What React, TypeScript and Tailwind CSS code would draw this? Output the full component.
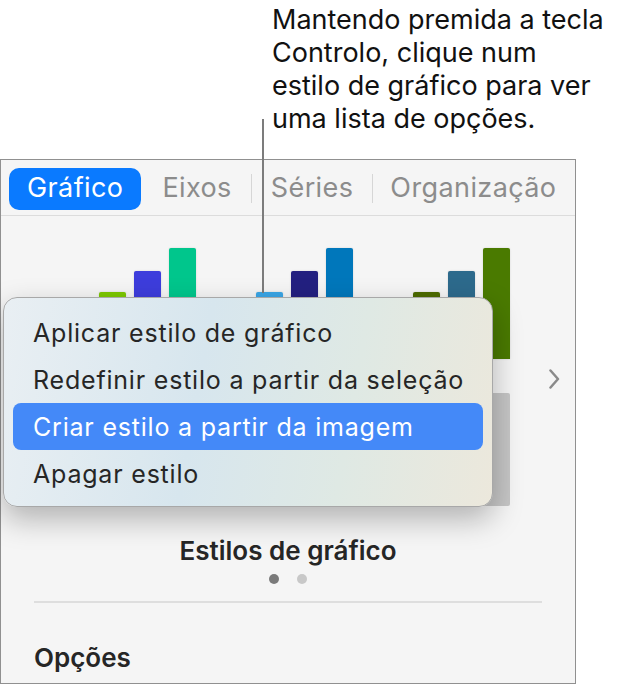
import React from "react";

const bars = [
  ["bg-[#7cc800]", "bg-[#3d3ddc]", "bg-[#00c68c]"],
  ["bg-[#3aa6e6]", "bg-[#232080]", "bg-[#0077bb]"],
  ["bg-[#4d6b00]", "bg-[#2d6a8c]", "bg-[#4a7a00]"],
];
const heights = ["h-[67px]", "h-[88px]", "h-[111px]"];

const menuItems = [
  "Aplicar estilo de gráfico",
  "Redefinir estilo a partir da seleção",
  "Criar estilo a partir da imagem",
  "Apagar estilo",
];

export default function App() {
  return (
    <div className="relative w-[622px] h-[684px] bg-white overflow-hidden font-['Inter','Liberation_Sans',sans-serif]">
      {/* callout */}
      <div className="h-[159px] pl-[272px] pt-[3px] text-[27px] leading-[33px] text-[#111]">
        Mantendo premida a tecla
        <br />
        Controlo, clique num
        <br />
        estilo de gráfico para ver
        <br />
        uma lista de opções.
      </div>

      {/* inspector panel */}
      <div className="w-[576px] h-[525px] border border-[#909090] bg-[#f5f5f5] flex flex-col">
        {/* tabs */}
        <div className="h-[56px] shrink-0 border-b border-[#dcdcdc] flex items-center pl-[8px] pt-[2px] text-[27px] tracking-[0.4px] text-[#8c8c8c]">
          <div className="h-[42px] px-[18px] rounded-[10px] bg-[#0a7aff] text-white flex items-center">
            Gráfico
          </div>
          <span className="ml-[21px]">Eixos</span>
          <div className="w-px h-[29px] bg-[#d6d6d6] mx-[19px]" />
          <span>Séries</span>
          <div className="w-px h-[29px] bg-[#d6d6d6] ml-[19px] mr-[17px]" />
          <span>Organização</span>
        </div>

        {/* chart styles */}
        <div className="flex items-center pt-[32px] pl-[98px]">
          <div className="grid grid-cols-3 gap-x-[60px] gap-y-[34px]">
            {bars.map((group, g) => (
              <div key={g} className="w-[97px] h-[111px] flex items-end gap-[8px]">
                {group.map((c, i) => (
                  <div key={i} className={`w-[27px] rounded-t-[2px] shadow-[0_0_2px_rgba(0,0,0,0.15)] ${heights[i]} ${c}`} />
                ))}
              </div>
            ))}
            {[0, 1, 2].map((i) => (
              <div key={i} className="w-[97px] h-[113px] rounded-[2px] bg-[#c6c6c6]" />
            ))}
          </div>
          <svg className="ml-[39px] mt-[4px]" width="11" height="20" viewBox="0 0 11 20" fill="none">
            <path d="M1.5 1.5L9 10L1.5 18.5" stroke="#8a8a8a" strokeWidth="2.5" strokeLinecap="round" strokeLinejoin="round" />
          </svg>
        </div>

        <div className="mt-[30px] text-center text-[26px] leading-[30px] font-semibold text-[#262626]">
          Estilos de gráfico
        </div>
        <div className="mt-[8px] flex justify-center gap-[18px]">
          <div className="w-[10px] h-[10px] rounded-full bg-[#7a7a7a]" />
          <div className="w-[10px] h-[10px] rounded-full bg-[#c8c8c8]" />
        </div>
        <div className="mt-[17px] mx-[33px] h-[2px] bg-[#dedede]" />
        <div className="mt-[40px] pl-[33px] text-[26px] leading-[30px] font-semibold text-[#262626]">
          Opções
        </div>
      </div>

      {/* callout leader line */}
      <div className="absolute left-[262px] top-[119px] w-[2px] h-[174px] bg-[#7c7c7c]" />

      {/* context menu */}
      <div className="absolute left-[3px] top-[297px] w-[490px] h-[210px] rounded-[14px] border border-[#a8a8a8] shadow-[0_12px_30px_rgba(0,0,0,0.28)] bg-[linear-gradient(100deg,#e9eff3_0%,#d7e6ee_40%,#dfe9e4_70%,#ece8dc_100%)] pt-[11px] px-[9px] text-[25px] tracking-[0.8px] text-[#262626]">
        {menuItems.map((t, i) => (
          <div
            key={t}
            className={`h-[47px] rounded-[8px] pl-[20px] pt-[3px] flex items-center ${i === 2 ? "bg-[#4489f8] text-white" : ""}`}
          >
            {t}
          </div>
        ))}
      </div>
    </div>
  );
}
